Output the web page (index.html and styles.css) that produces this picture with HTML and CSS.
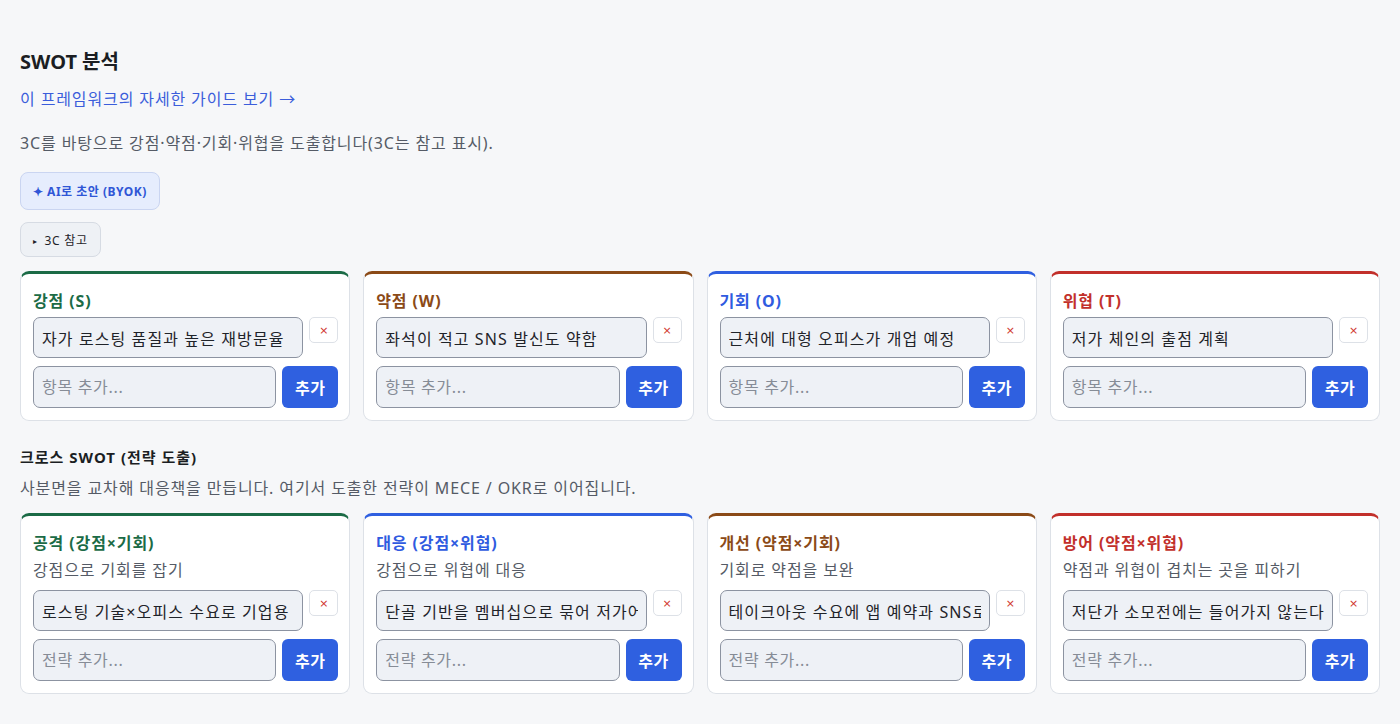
FILE: index.html
```html
<!DOCTYPE html>
<html lang="ko">
<head>
<meta charset="utf-8">
<title>SWOT 분석</title>
<link rel="stylesheet" href="styles.css">
</head>
<body>
<main class="page">
  <h1 class="title">SWOT 분석</h1>
  <a class="guide" href="#">이 프레임워크의 자세한 가이드 보기 →</a>
  <p class="desc">3C를 바탕으로 강점·약점·기회·위협을 도출합니다(3C는 참고 표시).</p>
  <div class="actions">
    <button class="btn-ai">✦ AI로 초안 (BYOK)</button>
    <button class="btn-ref"><span class="tri">▸</span> 3C 참고</button>
  </div>

  <section class="grid">
    <div class="card green">
      <h3 class="card-title">강점 (S)</h3>
      <div class="item-row">
        <input class="item" value="자가 로스팅 품질과 높은 재방문율">
        <button class="del">×</button>
      </div>
      <div class="add-row">
        <input class="add" placeholder="항목 추가...">
        <button class="add-btn">추가</button>
      </div>
    </div>
    <div class="card brown">
      <h3 class="card-title">약점 (W)</h3>
      <div class="item-row">
        <input class="item" value="좌석이 적고 SNS 발신도 약함">
        <button class="del">×</button>
      </div>
      <div class="add-row">
        <input class="add" placeholder="항목 추가...">
        <button class="add-btn">추가</button>
      </div>
    </div>
    <div class="card blue">
      <h3 class="card-title">기회 (O)</h3>
      <div class="item-row">
        <input class="item" value="근처에 대형 오피스가 개업 예정">
        <button class="del">×</button>
      </div>
      <div class="add-row">
        <input class="add" placeholder="항목 추가...">
        <button class="add-btn">추가</button>
      </div>
    </div>
    <div class="card red">
      <h3 class="card-title">위협 (T)</h3>
      <div class="item-row">
        <input class="item" value="저가 체인의 출점 계획">
        <button class="del">×</button>
      </div>
      <div class="add-row">
        <input class="add" placeholder="항목 추가...">
        <button class="add-btn">추가</button>
      </div>
    </div>
  </section>

  <h2 class="sub-title">크로스 SWOT (전략 도출)</h2>
  <p class="desc2">사분면을 교차해 대응책을 만듭니다. 여기서 도출한 전략이 MECE / OKR로 이어집니다.</p>

  <section class="grid">
    <div class="card green">
      <h3 class="card-title">공격 (강점×기회)</h3>
      <p class="card-sub">강점으로 기회를 잡기</p>
      <div class="item-row">
        <input class="item" value="로스팅 기술×오피스 수요로 기업용 원두 납품">
        <button class="del">×</button>
      </div>
      <div class="add-row">
        <input class="add" placeholder="전략 추가...">
        <button class="add-btn">추가</button>
      </div>
    </div>
    <div class="card blue">
      <h3 class="card-title">대응 (강점×위협)</h3>
      <p class="card-sub">강점으로 위협에 대응</p>
      <div class="item-row">
        <input class="item" value="단골 기반을 멤버십으로 묶어 저가어택에 대응">
        <button class="del">×</button>
      </div>
      <div class="add-row">
        <input class="add" placeholder="전략 추가...">
        <button class="add-btn">추가</button>
      </div>
    </div>
    <div class="card brown">
      <h3 class="card-title">개선 (약점×기회)</h3>
      <p class="card-sub">기회로 약점을 보완</p>
      <div class="item-row">
        <input class="item" value="테이크아웃 수요에 앱 예약과 SNS로 대응">
        <button class="del">×</button>
      </div>
      <div class="add-row">
        <input class="add" placeholder="전략 추가...">
        <button class="add-btn">추가</button>
      </div>
    </div>
    <div class="card red">
      <h3 class="card-title">방어 (약점×위협)</h3>
      <p class="card-sub">약점과 위협이 겹치는 곳을 피하기</p>
      <div class="item-row">
        <input class="item" value="저단가 소모전에는 들어가지 않는다">
        <button class="del">×</button>
      </div>
      <div class="add-row">
        <input class="add" placeholder="전략 추가...">
        <button class="add-btn">추가</button>
      </div>
    </div>
  </section>
</main>
</body>
</html>
```

FILE: styles.css
```css
* { box-sizing: border-box; }
html, body { margin: 0; padding: 0; }
body {
  background: #f6f7f9;
  font-family: "Noto Sans", "Noto Sans CJK KR", sans-serif;
  letter-spacing: 0.055em;
  color: #1f2329;
}
.page {
  padding: 48px 20px 20px;
  display: flex;
  flex-direction: column;
  align-items: flex-start;
}
.title {
  margin: 0;
  font-size: 20px;
  line-height: 28px;
  font-weight: 700;
  letter-spacing: 0;
  color: #1b1e23;
}
.guide {
  margin-top: 12px;
  font-size: 16px;
  line-height: 22px;
  color: #3b5ddb;
  text-decoration: none;
}
.desc {
  margin: 22px 0 0;
  font-size: 16px;
  line-height: 22px;
  color: #555b66;
}
.actions {
  margin-top: 18px;
  display: flex;
  flex-direction: column;
  align-items: flex-start;
  gap: 12px;
}
.btn-ai {
  height: 38px;
  padding: 0 12px;
  font-family: inherit;
  font-size: 12px;
  letter-spacing: 0.5px;
  font-weight: 700;
  color: #2f56d6;
  background: #e6edfd;
  border: 1px solid #cad5f1;
  border-radius: 8px;
}
.btn-ref {
  height: 35px;
  padding: 0 12px;
  font-family: inherit;
  font-size: 12px;
  letter-spacing: 0.7px;
  color: #1f2329;
  background: #eef1f5;
  border: 1px solid #d6dbe3;
  border-radius: 8px;
}
.tri { font-size: 8px; position: relative; top: -1px; margin-right: 3px; }
.grid {
  align-self: stretch;
  margin-top: 14px;
  display: grid;
  grid-template-columns: repeat(4, minmax(0, 1fr));
  gap: 13px;
}
.card {
  min-width: 0;
  background: #fff;
  border: 1px solid #dde1e7;
  border-top: 3px solid;
  border-radius: 9px;
  padding: 17px 11px 12px 12px;
}
.card.green { border-top-color: #1b6b46; }
.card.brown { border-top-color: #8b4a17; }
.card.blue { border-top-color: #2f5fe0; }
.card.red { border-top-color: #c2302b; }
.card-title {
  margin: 0 0 6px;
  font-size: 16px;
  line-height: 20px;
  font-weight: 700;
}
.green .card-title { color: #1b6b46; }
.brown .card-title { color: #8b4a17; }
.blue .card-title { color: #2f5be0; }
.red .card-title { color: #c2302b; }
.card-sub {
  margin: 4px 0 9px;
  font-size: 16px;
  line-height: 22px;
  color: #555b66;
}
.item-row, .add-row {
  display: flex;
  gap: 6px;
  align-items: flex-start;
}
.add-row { margin-top: 8px; }
.item, .add {
  flex: 1;
  width: 0;
  min-width: 0;
  font-family: inherit;
  font-size: 16px;
  letter-spacing: 1.1px;
  color: #1f2329;
  background: #eef1f6;
  border: 1px solid #8c93a1;
  border-radius: 7px;
  padding: 0 8px;
}
.add { letter-spacing: 0.7px; }
.item { height: 41px; }
.add { height: 42px; }
.add::placeholder { color: #868c96; }
.del {
  flex: none;
  width: 29px;
  height: 26px;
  padding: 0;
  font-family: "DejaVu Sans", sans-serif;
  font-size: 11px;
  letter-spacing: 0;
  color: #d0342c;
  background: #fff;
  border: 1px solid #dde1e7;
  border-radius: 5px;
}
.add-btn {
  flex: none;
  width: 56px;
  height: 42px;
  padding: 0;
  font-family: inherit;
  font-size: 16px;
  letter-spacing: 0.5px;
  font-weight: 700;
  color: #fff;
  background: #2f60e0;
  border: none;
  border-radius: 6px;
}
.sub-title {
  margin: 26px 0 0;
  font-size: 15px;
  line-height: 20px;
  letter-spacing: 1px;
  font-weight: 700;
  color: #1b1e23;
}
.desc2 {
  margin: 10px 0 0;
  font-size: 16px;
  line-height: 22px;
  color: #555b66;
}
```
